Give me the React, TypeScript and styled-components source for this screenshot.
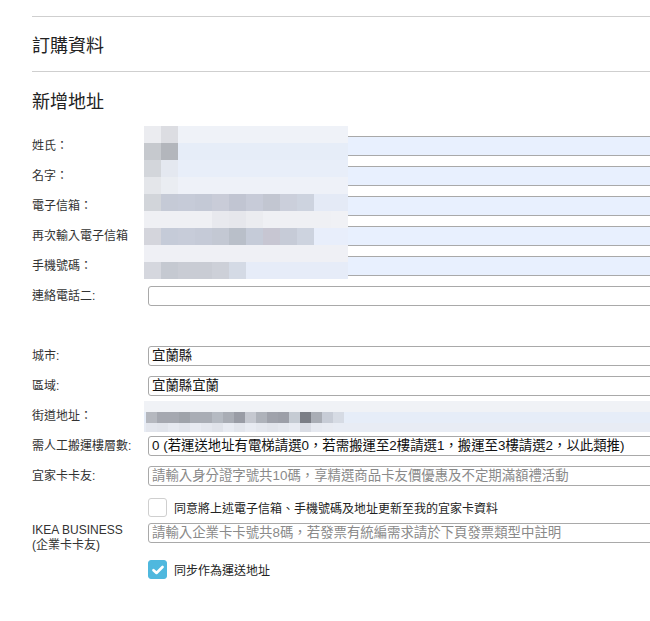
import React from "react";
import styled, { createGlobalStyle } from "styled-components";

const Global = createGlobalStyle`
  html, body { margin: 0; padding: 0; background: #fff; }
  body { font-family: "Liberation Sans", "Noto Sans CJK TC", sans-serif; color: #333; }
  * { box-sizing: border-box; }
`;

const Page = styled.div`
  width: 650px;
  height: 621px;
  overflow: hidden;
  padding: 16px 0 0 32px;
`;

const Rule = styled.div`
  width: 700px;
  border-top: 1px solid #cfcfcf;
`;

const Heading = styled.h2<{ $h: number }>`
  margin: 0;
  height: ${(p) => p.$h}px;
  display: flex;
  align-items: center;
  font-size: 18px;
  font-weight: normal;
  color: #222;
  font-family: "Noto Sans CJK TC", sans-serif;
`;

const Form = styled.div`
  position: relative;
  margin-top: 3px;
`;

const Row = styled.div<{ $h?: number; $top?: boolean }>`
  display: grid;
  grid-template-columns: 116px 1fr;
  align-items: ${(p) => (p.$top ? "start" : "center")};
  height: ${(p) => p.$h ?? 30}px;
`;

const Spacer = styled.div`
  height: 30px;
`;

const Label = styled.div`
  font-size: 12px;
  line-height: 15px;
  color: #333;
  font-family: "Liberation Sans", "Noto Sans CJK TC", sans-serif;
  white-space: nowrap;
`;

const Input = styled.div<{ $filled?: boolean; $round?: boolean; $placeholder?: boolean }>`
  width: 560px;
  height: 20px;
  border: 1px solid #a9a9a9;
  border-left: ${(p) => (p.$filled ? "none" : "1px solid #a9a9a9")};
  border-radius: ${(p) => (p.$round ? "3px 0 0 3px" : "0")};
  background: ${(p) => (p.$filled ? "#e8f0fe" : "#fff")};
  font-size: 13.4px;
  line-height: 18px;
  padding-left: 3px;
  white-space: nowrap;
  overflow: hidden;
  color: ${(p) => (p.$placeholder ? "#8a8a8a" : "#111")};
  font-family: "Liberation Sans", "Noto Sans CJK TC", sans-serif;
`;

const Mosaic = styled.div`
  position: absolute;
  left: 112px;
  top: -5px;
  display: grid;
  grid-template-columns: repeat(12, 17px);
  grid-auto-rows: 17px;
`;

const Cell = styled.div<{ $c: string }>`
  background: ${(p) => p.$c};
`;

const StreetField = styled.div`
  margin-left: -4px;
  height: 31px;
  width: 540px;
  display: flex;
  flex-direction: column;
`;

const Band = styled.div<{ $h: number; $bg: string }>`
  height: ${(p) => p.$h}px;
  background: ${(p) => p.$bg};
  display: flex;
  padding-left: 2px;
`;

const Block = styled.div<{ $c: string }>`
  width: 11px;
  height: 100%;
  background: ${(p) => p.$c};
`;

const CheckRow = styled.label`
  display: flex;
  align-items: center;
  gap: 7px;
  font-size: 12px;
  color: #222;
  font-family: "Liberation Sans", "Noto Sans CJK TC", sans-serif;
`;

const Box = styled.span<{ $checked?: boolean }>`
  width: 19px;
  height: 19px;
  border-radius: 3px;
  border: 1px solid ${(p) => (p.$checked ? "#4fb8de" : "#cfcfcf")};
  background: ${(p) => (p.$checked ? "#4fb8de" : "#fff")};
  display: flex;
  align-items: center;
  justify-content: center;
  flex: none;
`;

const L = "#eff2f8";
const mosaic: string[][] = [
  ["#ebecf0", "#dcdde2", ...Array(10).fill(L)],
  ["#c6c9ce", "#b3b6bc", ...Array(10).fill("#e6edf8")],
  ["#d3d6db", "#e4e8f0", ...Array(10).fill("#e8eef9")],
  ["#e4e6ea", "#eaedf2", ...Array(10).fill("#eef1f8")],
  ["#d2d5da", "#c5cad6", "#c6cbd8", "#c4c9d6", "#c9ccd8", "#c1c5d2", "#c7cbd8", "#c2c6d1", "#cbcfdb", "#cdd3df", "#e4eaf6", "#e4eaf6"],
  ["#eff0f4", "#eff0f4", "#eff0f4", "#eff0f4", "#e8e9ee", "#e6e7ec", "#ebecf0", "#eff0f4", "#eff0f4", "#eff0f4", "#eff0f4", "#f0f1f5"],
  ["#d4d5dc", "#c5cbd8", "#c7ccd9", "#c5cad7", "#c3c8d3", "#b9bfc9", "#c5cbd8", "#c7c6d2", "#c6cbd7", "#cdd3df", "#e8eefb", "#e8eefb"],
  Array(12).fill("#eff0f5"),
  ["#d5d7de", "#c5c9d1", "#c9ccd4", "#c9ccd4", "#cdd0d8", "#d4dae5", ...Array(6).fill("#e6ecf8")],
];

const streetBlocks = [
  "#b5b8bf", "#a5a8b0", "#a5a8b0", "#9fa3aa", "#a9adb5", "#a9adb5", "#b5bac2", "#a9adb5", "#999ca5",
  "#c5c8d0", "#aeb2ba", "#9fa2ab", "#9c9fa8", "#c5cbd3", "#7b7e86", "#a9adb5", "#c7ccd6", "#d6dbe4",
];
const streetLow = [
  "#e3e6ed", "#e1e4eb", "#e6e9f0", "#e2e5ec", "#e8ebf2", "#e4e7ee", "#e0e3ea", "#e8ebf2", "#e2e5ec",
  "#e8ebf2", "#e4e7ee", "#e1e4eb", "#e4e7ee", "#e8ebf2", "#dadde5", "#e6e9f0", "#e8ebf2", "#e8ecf4",
];

const Check = () => (
  <svg width="12" height="10" viewBox="0 0 12 10">
    <path d="M1.5 5.2 L4.5 8 L10.5 2" stroke="#fff" strokeWidth="2.6" fill="none" strokeLinecap="round" strokeLinejoin="round" />
  </svg>
);

export default function App() {
  return (
    <Page>
      <Global />
      <Rule />
      <Heading $h={54}>訂購資料</Heading>
      <Rule />
      <Heading $h={56}>新增地址</Heading>
      <Form>
        <Row><Label>姓氏：</Label><Input $filled /></Row>
        <Row><Label>名字：</Label><Input $filled /></Row>
        <Row><Label>電子信箱：</Label><Input $filled /></Row>
        <Row><Label>再次輸入電子信箱</Label><Input $filled /></Row>
        <Row><Label>手機號碼：</Label><Input $filled /></Row>
        <Mosaic>
          {mosaic.flatMap((r, i) => r.map((c, j) => <Cell key={`${i}-${j}`} $c={c} />))}
        </Mosaic>
        <Row><Label>連絡電話二:</Label><Input $round /></Row>
        <Spacer />
        <Row><Label>城市:</Label><Input $round>宜蘭縣</Input></Row>
        <Row><Label>區域:</Label><Input $round>宜蘭縣宜蘭</Input></Row>
        <Row>
          <Label>街道地址：</Label>
          <StreetField>
            <Band $h={11} $bg="#f0f2f6" />
            <Band $h={11} $bg="#e6edf8">
              {streetBlocks.map((c, i) => <Block key={i} $c={c} />)}
            </Band>
            <Band $h={9} $bg="#e8ecf4">
              {streetLow.map((c, i) => <Block key={i} $c={c} />)}
            </Band>
          </StreetField>
        </Row>
        <Row>
          <Label>需人工搬運樓層數:</Label>
          <Input $round>0 (若運送地址有電梯請選0，若需搬運至2樓請選1，搬運至3樓請選2，以此類推)</Input>
        </Row>
        <Row>
          <Label>宜家卡卡友:</Label>
          <Input $round $placeholder>請輸入身分證字號共10碼，享精選商品卡友價優惠及不定期滿額禮活動</Input>
        </Row>
        <Row $h={32}>
          <span />
          <CheckRow><Box />同意將上述電子信箱、手機號碼及地址更新至我的宜家卡資料</CheckRow>
        </Row>
        <Row $h={30} $top>
          <Label>IKEA BUSINESS<br />(企業卡卡友)</Label>
          <Input $round $placeholder>請輸入企業卡卡號共8碼，若發票有統編需求請於下頁發票類型中註明</Input>
        </Row>
        <Row $h={33}>
          <span />
          <CheckRow><Box $checked><Check /></Box>同步作為運送地址</CheckRow>
        </Row>
      </Form>
    </Page>
  );
}
